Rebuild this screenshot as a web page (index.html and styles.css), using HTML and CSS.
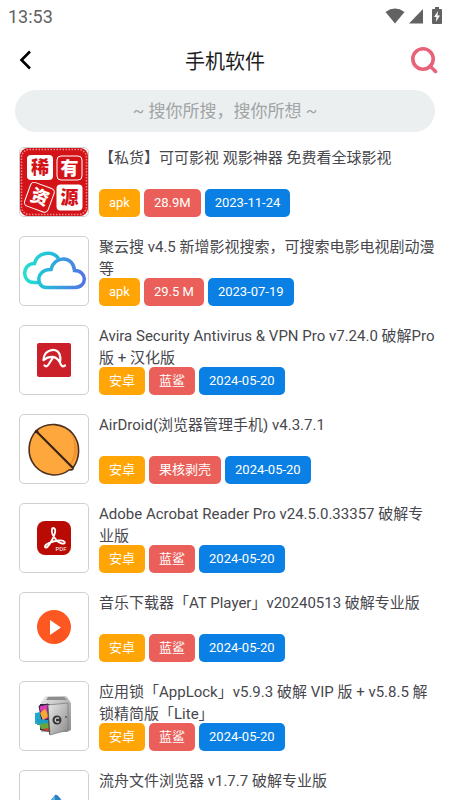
FILE: index.html
```html
<!DOCTYPE html>
<html lang="zh-CN">
  <head>
    <meta charset="UTF-8" />
    <meta name="viewport" content="width=device-width, initial-scale=1.0" />
    <title>手机软件</title>
    <link rel="stylesheet" href="styles.css">
  </head>
  <body>
    <div class="status">
      <span>13:53</span>
      <div class="status-icons">
        <svg width="20" height="16" viewBox="0 0 20 16"><path d="M.5 4Q10-2.800 19.500 4L10 15.500z" /></svg>
        <svg width="14" height="16" viewBox="0 0 14 16"><path d="M14 1v14.500H0z" /></svg>
        <svg class="battery" width="10" height="18" viewBox="0 0 10 18"><path d="M3 0h4v2h2q1 0 1 1v13q0 1-1 1H1q-1 0-1-1V3q0-1 1-1h2z" /><path class="bolt" d="M6 4L2 10h2.500L3.800 15 8 8.500H5.500z" /></svg>
      </div>
    </div>
    <header class="header">
      <button class="icon-btn" aria-label="返回">
        <svg width="16" height="20" viewBox="0 0 16 20"><path d="M12 1.500L3.500 10l8.500 8.500" fill="none" stroke="#000" stroke-width="2.600" /></svg>
      </button>
      <h1>手机软件</h1>
      <button class="icon-btn" aria-label="搜索">
        <svg width="28" height="28" viewBox="0 0 28 28" fill="none" stroke="#e8637a"><circle cx="13" cy="13" r="10.200" stroke-width="3.600" /><path d="M20 20l5.500 5.500" stroke-width="3.600" stroke-linecap="round" /></svg>
      </button>
    </header>
    <div class="search">
      <input type="text" placeholder="~ 搜你所搜，搜你所想 ~" aria-label="搜索软件" />
    </div>
    <ul class="list">
      <li class="app">
        <div class="app-icon">
          <svg width="68" height="68" viewBox="0 0 68 68">
            <rect x="0" y="0" width="68" height="68" rx="8" fill="#d31318" />
            <rect x="1.500" y="1.500" width="65" height="65" rx="8" fill="none" stroke="#eb8d8f" stroke-width="1.500" stroke-dasharray="1.500 1.500" />
            <rect x="7" y="7" width="26" height="25" rx="4" fill="#fff" />
            <rect x="37" y="8" width="25" height="24" rx="4" fill="none" stroke="#fff" />
            <rect x="36.500" y="36.500" width="26" height="26" rx="4" fill="#fff" />
            <rect x="7" y="37" width="25" height="25" rx="4" fill="none" stroke="#fff" transform="rotate(20 20 49)" />
            <g class="seal">
              <text x="20" y="26" fill="#d31318">稀</text>
              <text x="49.500" y="26.500" fill="#fff">有</text>
              <text x="20" y="55.500" fill="#fff" transform="rotate(20 20 49)">资</text>
              <text x="49.500" y="56" fill="#d31318">源</text>
            </g>
          </svg>
        </div>
        <div class="app-info">
          <h2>【私货】可可影视 观影神器 免费看全球影视</h2>
          <div class="tags"><span class="tag">apk</span><span class="tag red">28.9M</span><span class="tag blue">2023-11-24</span></div>
        </div>
      </li>
      <li class="app">
        <div class="app-icon">
          <svg width="68" height="68" viewBox="0 0 68 68" fill="none" stroke-width="3.500">
            <defs>
              <linearGradient id="cloud1" x1="0" x2="1"><stop offset="0" stop-color="#25dfcf" /><stop offset="1" stop-color="#23b4dc" /></linearGradient>
              <linearGradient id="cloud2" x1="0" x2="1"><stop offset="0" stop-color="#20c5d8" /><stop offset="1" stop-color="#5374e6" /></linearGradient>
            </defs>
            <path d="M21 45.500H14C1.500 45.500 1.500 26.500 14.500 26.500C17.500 15 32.500 13 38.500 21.500" stroke="url(#cloud1)" />
            <path d="M26.500 50.500H55C67.500 50.500 67.500 33.500 54.500 33.500C53.500 18.500 34.500 18 31 32.500C15.500 32 15.500 50.500 26.500 50.500z" stroke="url(#cloud2)" />
          </svg>
        </div>
        <div class="app-info">
          <h2>聚云搜 v4.5 新增影视搜索，可搜索电影电视剧动漫等</h2>
          <div class="tags"><span class="tag">apk</span><span class="tag red">29.5 M</span><span class="tag blue">2023-07-19</span></div>
        </div>
      </li>
      <li class="app">
        <div class="app-icon">
          <svg width="68" height="68" viewBox="0 0 68 68">
            <rect x="17" y="17" width="34" height="34" rx="2" fill="#cb2029" />
            <path d="M23.500 34C23.500 24 36 20.500 39.500 28Q41 31.500 40 36.500C36 29.500 29.500 29.500 23.500 34zM33 31.500L28.500 38.500Q26.500 41.500 24.500 39.500M40 36.500Q41.500 42 45 39.500" fill="none" stroke="#fff" stroke-width="2.200" stroke-linecap="round" stroke-linejoin="round" />
          </svg>
        </div>
        <div class="app-info">
          <h2>Avira Security Antivirus &amp; VPN Pro v7.24.0 破解Pro版 + 汉化版</h2>
          <div class="tags"><span class="tag">安卓</span><span class="tag red">蓝鲨</span><span class="tag blue">2024-05-20</span></div>
        </div>
      </li>
      <li class="app">
        <div class="app-icon">
          <svg width="68" height="68" viewBox="0 0 68 68">
            <path d="M16 16C27 6 44 8 53 19C61 29 60 43 53 53Q54 55 49 55C39 63 24 61 15 51C6 40 8 25 16 16z" fill="#fda73c" stroke="#4d3022" stroke-width="1.600" />
            <path d="M51 19C60 31 58 45 49 51C55 41 56 30 51 19z" fill="#ee9331" />
            <path d="M16 16l37 37" stroke="#382118" stroke-width="2.200" />
            <circle cx="16.500" cy="16.500" r="1.800" fill="#382118" />
          </svg>
        </div>
        <div class="app-info">
          <h2>AirDroid(浏览器管理手机) v4.3.7.1</h2>
          <div class="tags"><span class="tag">安卓</span><span class="tag red">果核剥壳</span><span class="tag blue">2024-05-20</span></div>
        </div>
      </li>
      <li class="app">
        <div class="app-icon">
          <svg width="68" height="68" viewBox="0 0 68 68">
            <rect x="17" y="17" width="34" height="34" rx="8" fill="#b90b03" />
            <path d="M33 24C37 24 35 31 32 36C29 42 26 45 25 43C24 40 33 37 39 36.500C45 36 47 40 42 39.500C37 39 31 30 32 26Q32 24 33 24z" fill="none" stroke="#fff" stroke-width="1.800" />
            <text class="pdf" x="41" y="47">PDF</text>
          </svg>
        </div>
        <div class="app-info">
          <h2>Adobe Acrobat Reader Pro v24.5.0.33357 破解专业版</h2>
          <div class="tags"><span class="tag">安卓</span><span class="tag red">蓝鲨</span><span class="tag blue">2024-05-20</span></div>
        </div>
      </li>
      <li class="app">
        <div class="app-icon">
          <svg width="68" height="68" viewBox="0 0 68 68">
            <circle cx="34" cy="34" r="17" fill="#fd5722" />
            <path d="M41 34l7 9-13 8-5-10z" fill="#f85420" />
            <path d="M30 27v15l11-7.500z" fill="#fff" />
          </svg>
        </div>
        <div class="app-info">
          <h2>音乐下载器「AT Player」v20240513 破解专业版</h2>
          <div class="tags"><span class="tag">安卓</span><span class="tag red">蓝鲨</span><span class="tag blue">2024-05-20</span></div>
        </div>
      </li>
      <li class="app">
        <div class="app-icon">
          <svg width="68" height="68" viewBox="0 0 68 68">
            <defs>
              <linearGradient id="steel" x1="0" x2="1" y2="1"><stop offset="0" stop-color="#e9e9e9" /><stop offset="1" stop-color="#8b8b8b" /></linearGradient>
            </defs>
            <path d="M21 20l4-5q1-1 3-1h16q2 0 3 1l4 6v27l-4 2H21z" fill="url(#steel)" />
            <path d="M26 18h21l-3-3H28z" fill="#8d8d8d" />
            <path d="M20 22h10v28l-10-2z" fill="#303038" />
            <path d="M15 31l6-1v11l-6 1z" fill="#21a7cf" />
            <path d="M19 24l9-2 2 14-8 3z" fill="#dc3bb4" stroke="#232340" />
            <path d="M20 31l5-4 4 7-6 4z" fill="#f9a833" />
            <path d="M17 37l12 1v5H17z" fill="#1d9fc4" />
            <path d="M19 42l10-1v6H21z" fill="#67a83a" />
            <path d="M22 47l7-1v4z" fill="#cf4033" />
            <path d="M28 23l20-2v27l-18 5z" fill="url(#steel)" stroke="#777" stroke-width=".7" />
            <path d="M28 23l2 30-1-1-2-27z" fill="#4b4b4b" />
            <circle cx="37" cy="38" r="4.500" fill="#353535" />
            <path d="M39 36.500a2.200 2.200 0 1 0 0 3" fill="none" stroke="#ddd" stroke-width="1.200" />
            <circle cx="46" cy="35" r="1" fill="#555" />
          </svg>
        </div>
        <div class="app-info">
          <h2>应用锁「AppLock」v5.9.3 破解 VIP 版 + v5.8.5 解锁精简版「Lite」</h2>
          <div class="tags"><span class="tag">安卓</span><span class="tag red">蓝鲨</span><span class="tag blue">2024-05-20</span></div>
        </div>
      </li>
      <li class="app">
        <div class="app-icon">
          <svg width="68" height="68" viewBox="0 0 68 68">
            <path d="M35 24L22 40h26L40 27q-3-4-5-3z" fill="#2980c4" />
            <path d="M35 24l-7 10 7-5z" fill="#5db2e3" />
          </svg>
        </div>
        <div class="app-info">
          <h2>流舟文件浏览器 v1.7.7 破解专业版</h2>
        </div>
      </li>
    </ul>
  </body>
</html>
```
FILE: styles.css
```css
* {
  margin: 0;
  padding: 0;
  box-sizing: border-box;
}
body {
  height: 100vh;
  display: flex;
  flex-direction: column;
  overflow: hidden;
  background-color: #fff;
  color: #47474d;
  font-family: Roboto, "Noto Sans CJK SC", sans-serif;
}
svg {
  display: block;
}
.status {
  display: flex;
  justify-content: space-between;
  align-items: center;
  height: 32px;
  padding: 0 8px;
  font-size: 18px;
  color: #626262;
}
.status-icons {
  display: flex;
  align-items: center;
  gap: 4px;
  fill: #626262;
}
.battery {
  margin-left: 5px;
}
.bolt {
  fill: #fff;
}
.header {
  display: flex;
  justify-content: space-between;
  align-items: center;
  height: 56px;
  padding: 0 12px;
}
.header h1 {
  font-size: 20px;
  font-weight: 400;
  color: #1d1d1d;
}
.icon-btn {
  display: flex;
  justify-content: center;
  align-items: center;
  width: 28px;
  height: 28px;
  border: none;
  background: none;
}
.search {
  padding: 2px 15px 15px;
}
.search input {
  display: block;
  width: 100%;
  height: 42px;
  border: none;
  border-radius: 21px;
  background-color: #ebeff0;
  font: inherit;
  font-size: 17px;
  text-align: center;
}
.search input::placeholder {
  color: #a0a4a5;
}
.list {
  flex: 1;
  min-height: 0;
  padding: 0 15px 0 19px;
  overflow: hidden;
  list-style: none;
}
.app {
  display: flex;
  gap: 10px;
  margin-bottom: 19px;
}
.app-icon {
  flex: none;
  width: 70px;
  height: 70px;
  border: 1px solid #d0d0d0;
  border-radius: 5px;
}
.app-info {
  flex: 1;
  min-width: 0;
}
.app-info h2 {
  height: 42px;
  font-size: 15px;
  font-weight: 400;
  line-height: 22px;
}
.tags {
  display: flex;
  gap: 4px;
}
.tag {
  height: 28px;
  padding: 0 10px;
  border-radius: 5px;
  background-color: #ffa506;
  color: #fff;
  font-size: 13px;
  line-height: 28px;
}
.red {
  background-color: #ea5f59;
}
.blue {
  background-color: #0b80e4;
}
.seal {
  font-size: 18px;
  font-weight: 900;
  text-anchor: middle;
}
.pdf {
  fill: #fff;
  font-size: 6px;
  text-anchor: middle;
}
```
